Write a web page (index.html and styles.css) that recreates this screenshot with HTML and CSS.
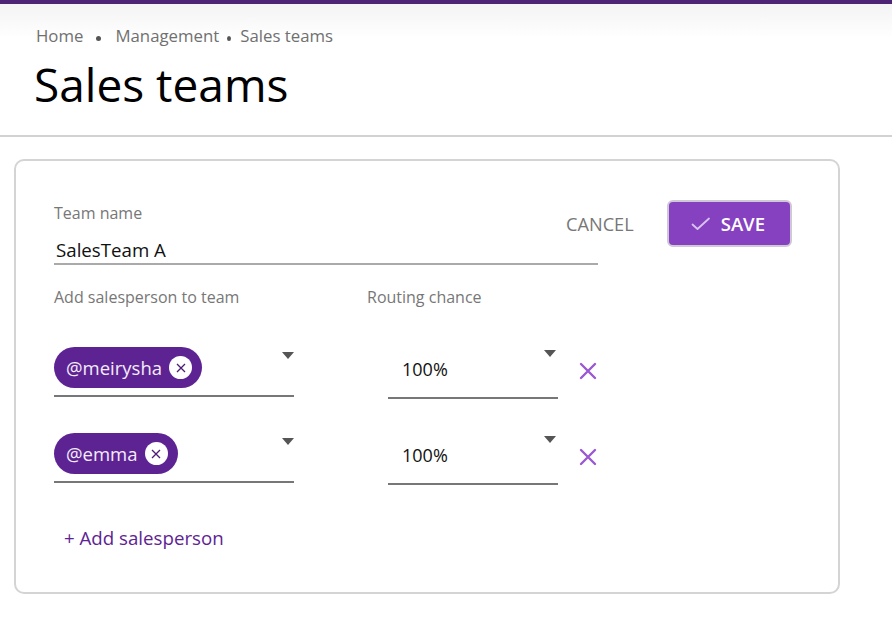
FILE: index.html
```html
<!DOCTYPE html>
<html lang="en">
<head>
    <meta charset="UTF-8">
    <meta name="viewport" content="width=device-width, initial-scale=1.0">
    <title>Sales teams</title>
    <link rel="stylesheet" href="styles.css">
</head>
<body>
    <div class="topbar"></div>
    <header class="page-header">
        <nav class="breadcrumb">
            <span>Home</span>
            <span class="dot first"></span>
            <span>Management</span>
            <span class="dot second"></span>
            <span>Sales teams</span>
        </nav>
        <h1 class="title">Sales teams</h1>
    </header>

    <div class="card">
        <div class="top-row">
            <div class="field team-name">
                <label class="label">Team name</label>
                <div class="input">SalesTeam A</div>
            </div>
            <div class="actions">
                <button class="btn cancel">Cancel</button>
                <button class="btn save">
                    <svg width="20" height="14" viewBox="0 0 20 14"><path d="M1.5 7.5 L6.5 12 L18 1.5" fill="none" stroke="#d9c3ee" stroke-width="1.8" stroke-linecap="round" stroke-linejoin="round"/></svg>
                    Save
                </button>
            </div>
        </div>

        <div class="grid-labels">
            <span class="label">Add salesperson to team</span>
            <span class="label">Routing chance</span>
        </div>

        <div class="member-row">
            <div class="select-field">
                <span class="chip">@meirysha
                    <span class="chip-close"><svg width="10" height="10" viewBox="0 0 10 10"><path d="M1 1 L9 9 M9 1 L1 9" stroke="#4a1c75" stroke-width="1.3"/></svg></span>
                </span>
                <span class="caret"></span>
            </div>
            <div class="select-field routing">
                <span class="value">100%</span>
                <span class="caret"></span>
            </div>
            <button class="remove"><svg width="18" height="18" viewBox="0 0 18 18"><path d="M2 2 L16 16 M16 2 L2 16" stroke="#9a58d4" stroke-width="2.4" stroke-linecap="round"/></svg></button>
        </div>

        <div class="member-row">
            <div class="select-field">
                <span class="chip">@emma
                    <span class="chip-close"><svg width="10" height="10" viewBox="0 0 10 10"><path d="M1 1 L9 9 M9 1 L1 9" stroke="#4a1c75" stroke-width="1.3"/></svg></span>
                </span>
                <span class="caret"></span>
            </div>
            <div class="select-field routing">
                <span class="value">100%</span>
                <span class="caret"></span>
            </div>
            <button class="remove"><svg width="18" height="18" viewBox="0 0 18 18"><path d="M2 2 L16 16 M16 2 L2 16" stroke="#9a58d4" stroke-width="2.4" stroke-linecap="round"/></svg></button>
        </div>

        <a class="add-link" href="#">+ Add salesperson</a>
    </div>
</body>
</html>
```

FILE: styles.css
```css
body {
    margin: 0;
    font-family: 'Open Sans', 'Noto Sans', sans-serif;
    background: #fff;
    color: #111;
}

.topbar {
    height: 4px;
    background: #4d2474;
}

.page-header {
    background: linear-gradient(180deg, #f3f3f3 0px, #fff 34px);
    padding: 21px 0 24px 34px;
    border-bottom: 2px solid #d2d2d2;
}

.breadcrumb {
    display: flex;
    align-items: center;
    font-size: 16.8px;
    line-height: 22px;
    color: #707070;
    padding-left: 2px;
}

.dot {
    width: 5px;
    height: 5px;
    border-radius: 50%;
    background: #555;
    margin-top: 4px;
}

.dot.first {
    margin-left: 13px;
    margin-right: 14px;
}

.dot.second {
    width: 4px;
    height: 5px;
    margin-left: 8px;
    margin-right: 9px;
}

.title {
    margin: 10px 0 0;
    font-size: 46px;
    font-weight: 400;
    line-height: 54px;
    color: #000;
}

.card {
    margin: 22px 0 0 14px;
    width: 784px;
    border: 2px solid #d4d4d4;
    border-radius: 10px;
    padding: 42px 0 42px 38px;
}

.top-row {
    display: flex;
    align-items: flex-start;
}

.label {
    display: block;
    font-size: 16px;
    line-height: 20px;
    color: #777;
}

.team-name {
    width: 544px;
}

.input {
    margin-top: 15px;
    font-size: 18.7px;
    line-height: 24px;
    padding-left: 2px;
    padding-bottom: 1px;
    border-bottom: 2px solid #aaa;
}

.actions {
    display: flex;
    align-items: center;
    margin-left: -32px;
    margin-top: -3px;
}

.btn {
    font-family: inherit;
    cursor: pointer;
}

.cancel {
    background: none;
    border: none;
    text-transform: uppercase;
    font-size: 18.2px;
    color: #777;
    padding: 0;
    margin-right: 33px;
}

.save {
    display: flex;
    align-items: center;
    gap: 10px;
    box-sizing: border-box;
    width: 125px;
    height: 47px;
    padding: 0 0 0 22px;
    background: #8641c1;
    border: 2px solid #d0c8d6;
    border-radius: 6px;
    color: #fff;
    font-size: 18.5px;
    font-weight: 600;
    text-transform: uppercase;
}

.grid-labels {
    display: grid;
    grid-template-columns: 313px auto;
    margin-top: 22px;
}

.member-row {
    display: grid;
    grid-template-columns: 240px 170px 40px;
    column-gap: 94px;
    margin-top: 40px;
    align-items: start;
}

.member-row + .member-row {
    margin-top: 34px;
}

.member-row .select-field {
    display: flex;
    justify-content: space-between;
    align-items: flex-start;
    height: 41px;
    padding-bottom: 7px;
    border-bottom: 2px solid #777;
}

.chip {
    display: inline-flex;
    align-items: center;
    height: 41px;
    padding: 0 10px 0 12px;
    gap: 7px;
    background: #5e2393;
    border-radius: 21px;
    color: #f3ecfa;
    font-size: 18.5px;
}

.chip-close {
    width: 23px;
    height: 23px;
    border-radius: 50%;
    background: #fff;
    display: flex;
    align-items: center;
    justify-content: center;
}

.caret {
    width: 0;
    height: 0;
    border-left: 6px solid transparent;
    border-right: 6px solid transparent;
    border-top: 7px solid #555;
    margin-top: 5px;
}

.member-row .routing {
    height: 43px;
    padding-bottom: 7px;
    padding-left: 14px;
}

.routing .value {
    font-size: 18px;
    margin-top: 10px;
}

.routing .caret {
    margin-top: 3px;
    margin-right: 2px;
}

.remove {
    background: none;
    border: none;
    padding: 0;
    margin: 15px 0 0 -73px;
    width: 18px;
    height: 18px;
    cursor: pointer;
}

.add-link {
    display: inline-block;
    margin: 41px 0 0 10px;
    font-size: 18.7px;
    line-height: 24px;
    color: #5e2393;
    text-decoration: none;
}
```
